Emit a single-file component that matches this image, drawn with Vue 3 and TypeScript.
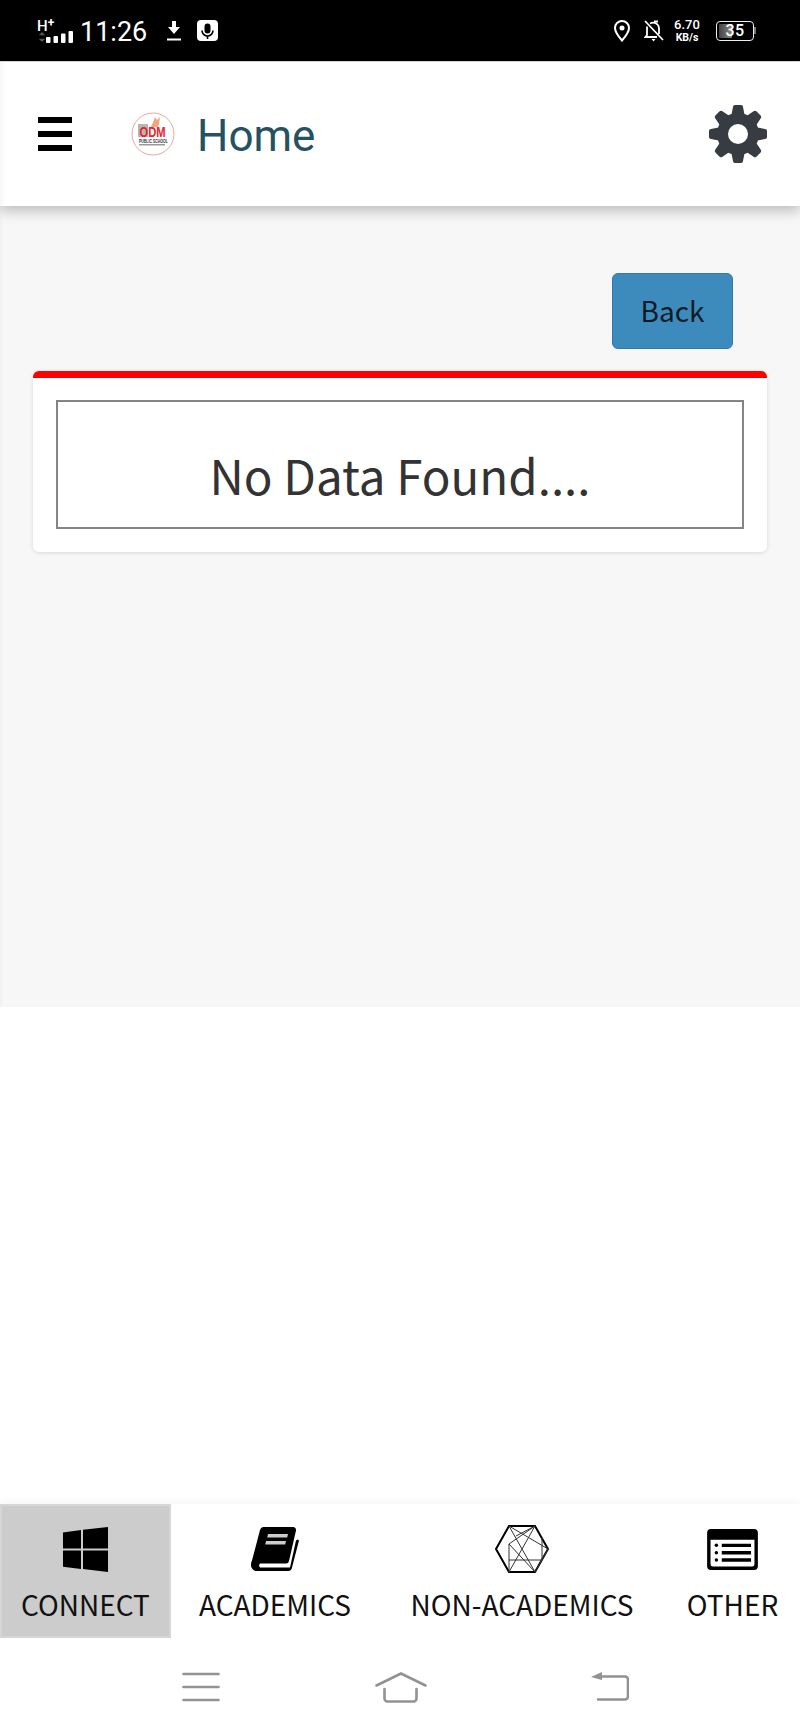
<script setup lang="ts">
interface Tab { label: string; kind: string; active?: boolean }
const tabs: Tab[] = [
  { label: 'CONNECT', kind: 'windows', active: true },
  { label: 'ACADEMICS', kind: 'book' },
  { label: 'NON-ACADEMICS', kind: 'hex' },
  { label: 'OTHER', kind: 'list' },
]
const teeth: number[] = [0, 45, 90, 135, 180, 225, 270, 315]
</script>

<template>
  <div class="phone">
    <div class="status">
      <div class="signal">
        <span class="hplus">H<sup>+</sup></span>
        <svg class="arrows" width="10" height="10" viewBox="0 0 10 12"><path d="M5 0l4 4H1zM5 12L1 8h8z" fill="#555" /></svg>
        <svg class="bars" width="27" height="14" viewBox="0 0 27 14">
          <rect x="0" y="7" width="4.500" height="6" rx="1" fill="#fff" />
          <rect x="7.500" y="6" width="4.500" height="7" rx="1" fill="#fff" />
          <rect x="15" y="3.500" width="4.500" height="9.500" rx="1" fill="#fff" />
          <rect x="22.500" y="1" width="4.500" height="12" rx="1" fill="#fff" />
        </svg>
      </div>
      <span class="time">11:26</span>
      <svg class="dl" width="14" height="20" viewBox="0 0 14 20"><path d="M5 0h4v6h4l-6 7-6-7h4zM0 17.500h14v2H0z" fill="#fff" /></svg>
      <svg class="mic" width="21" height="21" viewBox="0 0 21 21">
        <rect width="21" height="21" rx="4" fill="#fff" />
        <rect x="7.500" y="3.500" width="6" height="10" rx="3" fill="#000" />
        <path d="M5 10.500a5.500 5.500 0 0 0 11 0M10.500 16v3" stroke="#000" stroke-width="1.600" fill="none" />
      </svg>
      <div class="status-right">
        <svg width="16" height="22" viewBox="0 0 16 22"><path d="M8 1a7 7 0 0 0-7 7c0 4.500 7 12.500 7 12.500S15 12.500 15 8a7 7 0 0 0-7-7z" fill="none" stroke="#fff" stroke-width="2" /><circle cx="8" cy="8" r="2.500" fill="#fff" /></svg>
        <svg class="bell" width="20" height="22" viewBox="0 0 20 22">
          <path d="M3 6.500V15l-1.500 2H13M6 3.500A6 6 0 0 1 15 8v6" fill="none" stroke="#fff" stroke-width="1.800" />
          <path d="M1 1l18 19" stroke="#fff" stroke-width="1.800" />
          <path d="M7.500 19h4l-2 2.500z" fill="#fff" />
          <rect x="10" y="0.500" width="4" height="2" fill="#fff" />
        </svg>
        <div class="speed"><span>6.70</span><span class="unit">KB/s</span></div>
        <div class="battery">
          <div class="batt-box"><span class="batt-fill"></span><span class="batt-num">35</span></div>
          <span class="batt-tip"></span>
        </div>
      </div>
    </div>

    <header class="topbar">
      <div class="burger"><span></span><span></span><span></span></div>
      <svg class="logo" width="44" height="44" viewBox="0 0 44 44">
        <circle cx="22" cy="22" r="21" fill="#fff" stroke="#e8a9a2" stroke-width="1" />
        <path d="M20 15l3-7 1-3 2 3 3-3-1 7-1 3z" fill="#f2a57c" />
        <rect x="7" y="12" width="10" height="13" fill="#b5b5b5" />
        <text transform="translate(8.500 25) scale(.8 1)" class="logo-big">ODM</text>
        <text transform="translate(8 31) scale(.78 1)" class="logo-small">PUBLIC SCHOOL</text>
        <rect x="8" y="32" width="26" height="1.500" fill="#999" />
      </svg>
      <span class="title">Home</span>
      <svg class="gear" width="58" height="58" viewBox="0 0 58 58">
        <circle cx="29" cy="29" r="21" fill="#373b42" />
        <path v-for="a in teeth" :key="a" d="M24 2q0-2 2-2h6q2 0 2 2l2 10H22z" fill="#373b42" :transform="`rotate(${a} 29 29)`" />
        <circle cx="29" cy="29" r="10" fill="#fff" />
      </svg>
    </header>

    <main class="content">
      <div class="actions"><button class="back" type="button">Back</button></div>
      <section class="card">
        <div class="empty">No Data Found....</div>
      </section>
    </main>

    <div class="blank"></div>

    <nav class="tabs">
      <div v-for="t in tabs" :key="t.label" class="tab" :class="t.kind">
        <div class="slot">
          <svg v-if="t.kind === 'windows'" width="45" height="45" viewBox="0 0 45 45">
            <path d="M0 5.500L18 3v18.500H0zM20 2.700L45 0v21.500H20zM0 23.500h18V42L0 39.700zM20 23.500h25V45l-25-3z" fill="#000" />
          </svg>
          <svg v-else-if="t.kind === 'book'" width="48" height="44" viewBox="0 0 48 44">
            <path d="M12 0h30a3 3 0 0 1 3 3.500L38 34a3 3 0 0 1-3 2.500H9a3 3 0 0 0 0 4h30l6-27 1.800-1 1.200 1-7 27a4 4 0 0 1-4 3.500H7a6 6 0 0 1-7-6.500c0-1.500.5-3 1-4L9 3a4 4 0 0 1 3-3z" fill="#000" />
            <path d="M17 7h20l-.8 3.500h-20zM15 14h20l-.8 3.500h-20z" fill="#ccc" />
          </svg>
          <svg v-else-if="t.kind === 'hex'" width="54" height="48" viewBox="1 1 54 48">
            <path d="M2 25L15 2h26l13 23-13 23H15z" fill="none" stroke="#000" stroke-width="2" />
            <path d="M15 2l26 46M41 2L15 48M15 2l39 23M41 2L15 20v28M15 36h33M54 25L41 48M15 20l26 28M48 14v22M41 2L22 12" fill="none" stroke="#333" stroke-width="1" />
          </svg>
          <svg v-else width="51" height="41" viewBox="0 0 52 42">
            <path fill="#000" fill-rule="evenodd" d="M4 0h44a4 4 0 0 1 4 4v34a4 4 0 0 1-4 4H4a4 4 0 0 1-4-4V4a4 4 0 0 1 4-4zM3.500 11v25a2.500 2.500 0 0 0 2.500 2.500h40a2.500 2.500 0 0 0 2.500-2.500V11z" />
            <path fill="#000" d="M15 15h30v3.500H15zM15 22.500h30V26H15zM15 30h30v3.500H15z" />
            <circle cx="9.500" cy="16.750" r="1.800" fill="#000" /><circle cx="9.500" cy="24.250" r="1.800" fill="#000" /><circle cx="9.500" cy="31.750" r="1.800" fill="#000" />
          </svg>
        </div>
        <span class="label">{{ t.label }}</span>
      </div>
    </nav>

    <div class="sysnav">
      <svg class="sys-menu" width="38" height="30" viewBox="0 0 38 30"><path d="M1.500 2h35M1.500 15h35M1.500 28h35" stroke="#929292" stroke-width="2.600" stroke-linecap="round" fill="none" /></svg>
      <svg class="sys-home" width="52" height="31" viewBox="0 0 52 31"><path d="M1.500 13.500L26 1.500l24.500 12M9.500 17v9.500a3 3 0 0 0 3 3h26a3 3 0 0 0 3-3V17" stroke="#929292" stroke-width="2.600" fill="none" stroke-linecap="round" /></svg>
      <svg class="sys-back" width="38" height="30" viewBox="0 0 38 30"><path d="M10 4.500h24a3 3 0 0 1 3 3v17a3 3 0 0 1-3 3H7" stroke="#929292" stroke-width="2.600" fill="none" stroke-linecap="round" /><path d="M0 5l11-5v8z" fill="#929292" /></svg>
    </div>
  </div>
</template>

<style>
html, body { margin: 0; background: #fff; }
</style>

<style scoped>
.phone {
  width: 800px;
  height: 1734px;
  display: flex;
  flex-direction: column;
  overflow: hidden;
  background: #fff;
  font-family: "Noto Sans CJK SC", "Noto Sans", sans-serif;
}

.status {
  height: 62px;
  flex: none;
  background: #000;
  color: #fff;
  display: flex;
  align-items: center;
  padding-left: 37px;
  box-sizing: border-box;
  border-bottom: 1px solid #ddd;
  font-family: Roboto, sans-serif;
}
.signal { position: relative; width: 36px; height: 32px; margin-right: 7px; }
.hplus { position: absolute; left: 0; top: 3px; font-size: 15px; font-weight: 500; line-height: 16px; }
.hplus sup { font-size: 12px; font-weight: 700; line-height: 0; vertical-align: 4px; }
.arrows { position: absolute; left: 0; top: 17px; }
.bars { position: absolute; left: 9px; top: 15px; }
.time { font-size: 27px; line-height: 32px; margin-top: 2px; }
.dl { margin-left: 20px; }
.mic { margin-left: 16px; }
.status-right { margin-left: auto; display: flex; align-items: center; padding-right: 44px; }
.bell { margin-left: 14px; }
.speed { margin-left: 10px; display: flex; flex-direction: column; align-items: center; font-size: 13px; font-weight: 500; line-height: 13px; width: 26px; }
.speed span { white-space: nowrap; }
.unit { font-size: 10.500px; font-weight: 700; }
.battery { margin-left: 16px; display: flex; align-items: center; }
.batt-box { position: relative; width: 38px; height: 20px; box-sizing: border-box; border: 1.500px solid #eee; border-radius: 4px; display: flex; align-items: center; justify-content: center; }
.batt-fill { position: absolute; left: 2px; top: 2px; bottom: 2px; width: 13px; background: linear-gradient(90deg, #444, #888); border-radius: 1px; }
.batt-num { position: relative; font-size: 16px; font-weight: 500; letter-spacing: .5px; }
.batt-tip { width: 2px; height: 7px; background: #777; }

.topbar {
  height: 144px;
  flex: none;
  background: #fff;
  display: flex;
  align-items: center;
  position: relative;
  z-index: 2;
  box-shadow: 0 5px 12px rgba(0, 0, 0, .24), inset 6px 0 6px -5px rgba(0, 0, 0, .06);
  padding-left: 38px;
  padding-right: 33px;
}
.burger { width: 34px; display: flex; flex-direction: column; gap: 8px; }
.burger span { display: block; height: 6px; background: #000; }
.logo { margin-left: 59px; }
.logo-big { font: 700 14px "Liberation Sans", sans-serif; fill: #e8242c; }
.logo-small { font: 700 4.500px "Liberation Sans", sans-serif; fill: #333; }
.title { margin-left: 22px; margin-top: 4px; font-family: Roboto, sans-serif; font-size: 44px; color: #255263; line-height: 50px; }
.gear { margin-left: auto; }

.content {
  height: 801px;
  flex: none;
  box-sizing: border-box;
  background: #f7f7f7;
  padding: 67px 33px 0;
  box-shadow: inset 5px 0 5px -5px rgba(0, 0, 0, .06);
}
.actions { display: flex; justify-content: flex-end; padding-right: 34px; }
.back {
  width: 121px;
  height: 76px;
  box-sizing: border-box;
  background: #3d8bbc;
  border: 1px solid #327ba8;
  border-radius: 6px;
  color: #0d1a24;
  font-family: inherit;
  font-size: 28px;
  padding: 0 0 3px;
}
.card {
  margin-top: 22px;
  height: 181px;
  box-sizing: border-box;
  background: #fff;
  border-top: 7px solid #f00;
  border-radius: 6px;
  padding: 22px 23px 0;
  box-shadow: 0 1px 4px rgba(0, 0, 0, .12);
}
.empty {
  height: 129px;
  box-sizing: border-box;
  border: 2px solid #858585;
  text-align: center;
  font-size: 47.500px;
  line-height: 72px;
  padding-top: 37px;
  color: #333;
}

.blank { flex: 1; background: #fff; }

.tabs {
  height: 134px;
  flex: none;
  display: flex;
  background: #fff;
  position: relative;
  box-shadow: 0 -4px 8px rgba(0, 0, 0, .03);
}
.tab {
  display: flex;
  flex-direction: column;
  align-items: center;
  color: #000;
  box-sizing: border-box;
  padding-top: 22px;
}
.slot { height: 46px; display: flex; align-items: center; justify-content: center; }
.label { margin-top: 11px; font-size: 28px; line-height: 42px; white-space: nowrap; color: #111; }
.windows { width: 171px; background: #ccc; box-shadow: inset 0 0 0 2px #d6d6d6; }
.book { width: 208px; }
.hex { width: 286px; }
.list { width: 135px; }

.sysnav {
  height: 96px;
  flex: none;
  background: #fff;
  display: flex;
  align-items: flex-start;
  padding: 34px 0 0 182px;
  box-sizing: border-box;
}
.sys-home { margin-left: 155px; }
.sys-back { margin-left: 164px; }
</style>
